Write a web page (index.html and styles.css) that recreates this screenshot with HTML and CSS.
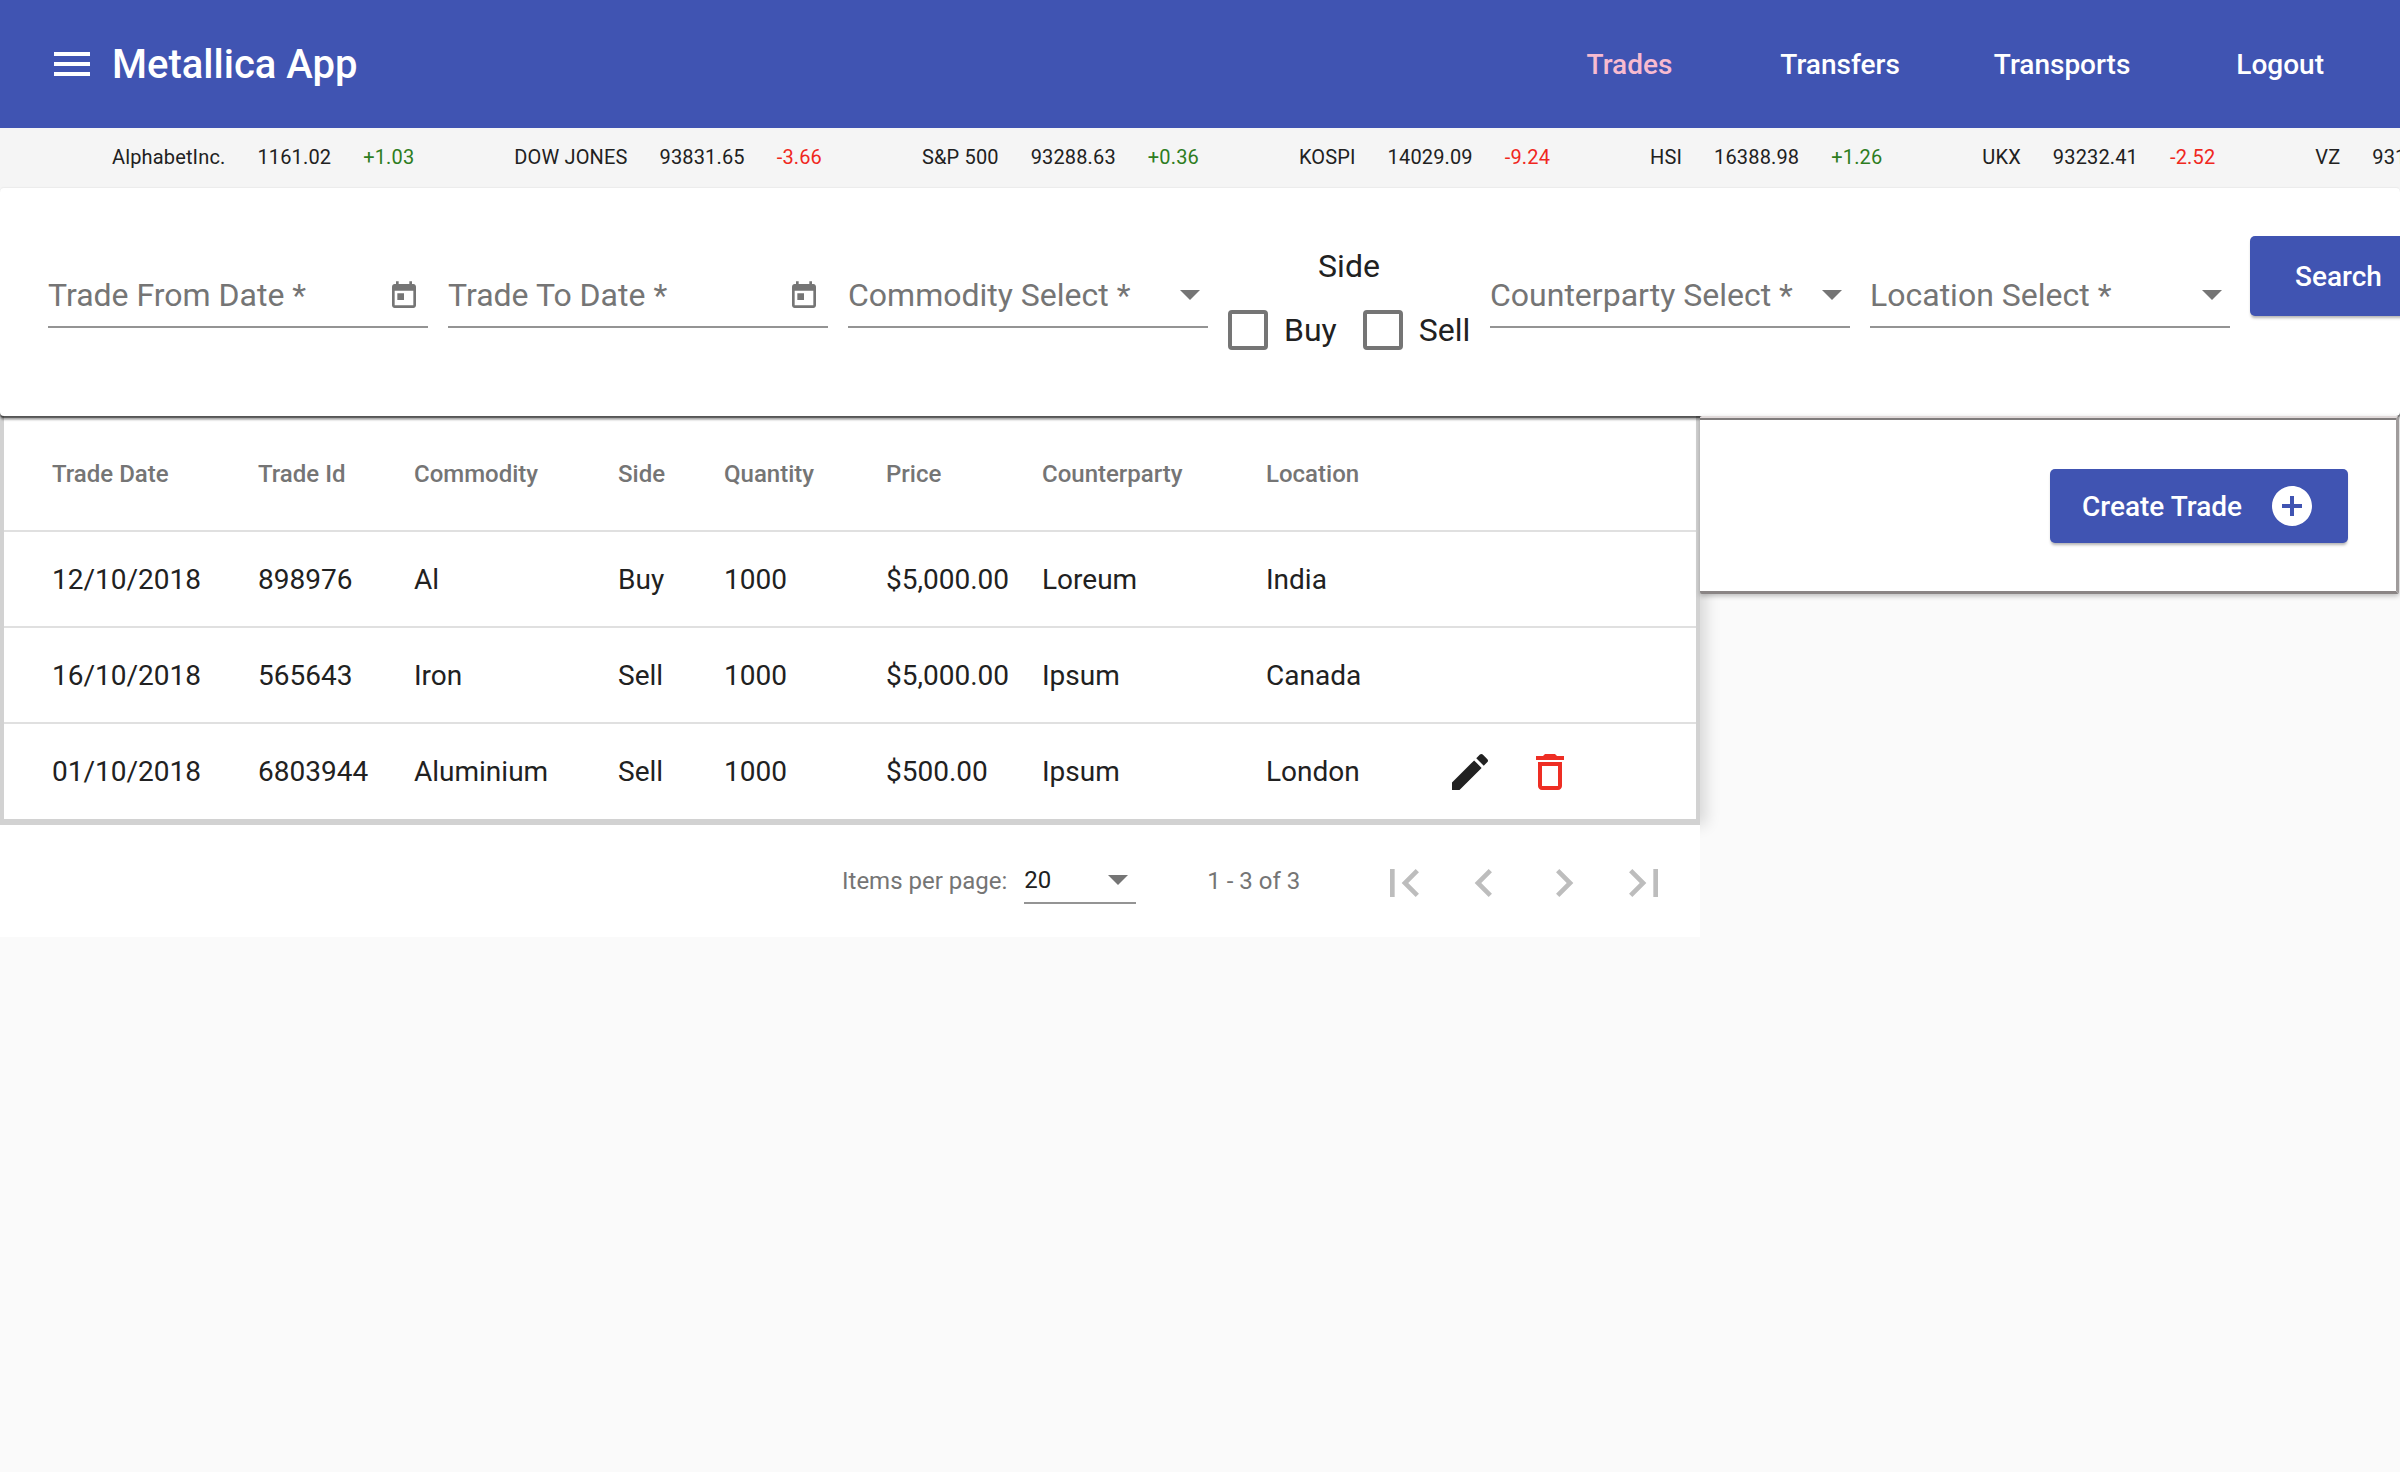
FILE: index.html
```html
<!DOCTYPE html>
<html lang="en">
<head>
    <meta charset="UTF-8">
    <title>Metallica App</title>
    <link rel="stylesheet" href="styles.css">
</head>
<body>
    <header class="topbar">
        <svg class="menu-icon" viewBox="0 0 24 24"><path d="M3 18h18v-2H3v2zm0-5h18v-2H3v2zm0-7v2h18V6H3z"/></svg>
        <span class="app-title">Metallica App</span>
        <nav class="topnav">
            <a class="nav-link nav-trades active">Trades</a>
            <a class="nav-link nav-transfers">Transfers</a>
            <a class="nav-link nav-transports">Transports</a>
            <a class="nav-link nav-logout">Logout</a>
        </nav>
    </header>

    <div class="ticker">
        <div class="tick"><span>AlphabetInc.</span><span>1161.02</span><span class="up">+1.03</span></div>
        <div class="tick"><span>DOW JONES</span><span>93831.65</span><span class="down">-3.66</span></div>
        <div class="tick"><span>S&amp;P 500</span><span>93288.63</span><span class="up">+0.36</span></div>
        <div class="tick"><span>KOSPI</span><span>14029.09</span><span class="down">-9.24</span></div>
        <div class="tick"><span>HSI</span><span>16388.98</span><span class="up">+1.26</span></div>
        <div class="tick"><span>UKX</span><span>93232.41</span><span class="down">-2.52</span></div>
        <div class="tick"><span>VZ</span><span>93116.20</span><span class="up">+0.88</span></div>
    </div>

    <section class="search-card">
        <div class="field date-field">
            <span class="field-label">Trade From Date *</span>
            <svg class="cal-icon" viewBox="0 0 24 24"><path d="M19 3h-1V1h-2v2H8V1H6v2H5c-1.11 0-1.99.9-1.99 2L3 19c0 1.1.89 2 2 2h14c1.1 0 2-.9 2-2V5c0-1.1-.9-2-2-2zm0 16H5V8h14v11zM7 10h5v5H7z"/></svg>
        </div>
        <div class="field date-field">
            <span class="field-label">Trade To Date *</span>
            <svg class="cal-icon" viewBox="0 0 24 24"><path d="M19 3h-1V1h-2v2H8V1H6v2H5c-1.11 0-1.99.9-1.99 2L3 19c0 1.1.89 2 2 2h14c1.1 0 2-.9 2-2V5c0-1.1-.9-2-2-2zm0 16H5V8h14v11zM7 10h5v5H7z"/></svg>
        </div>
        <div class="field select-field">
            <span class="field-label">Commodity Select *</span>
            <span class="arrow"></span>
        </div>
        <div class="side-group">
            <div class="side-title">Side</div>
            <div class="side-options">
                <span class="check"></span><span class="check-label">Buy</span>
                <span class="check"></span><span class="check-label">Sell</span>
            </div>
        </div>
        <div class="field select-field">
            <span class="field-label">Counterparty Select *</span>
            <span class="arrow"></span>
        </div>
        <div class="field select-field">
            <span class="field-label">Location Select *</span>
            <span class="arrow"></span>
        </div>
        <button class="btn search-btn">Search</button>
    </section>

    <main class="content">
        <div class="left-col">
            <table class="trades">
                <colgroup>
                    <col class="c-date"><col class="c-id"><col class="c-comm"><col class="c-side">
                    <col class="c-qty"><col class="c-price"><col class="c-cp"><col class="c-loc"><col>
                </colgroup>
                <thead>
                    <tr><th>Trade Date</th><th>Trade Id</th><th>Commodity</th><th>Side</th><th>Quantity</th><th>Price</th><th>Counterparty</th><th>Location</th><th></th></tr>
                </thead>
                <tbody>
                    <tr><td>12/10/2018</td><td>898976</td><td>Al</td><td>Buy</td><td>1000</td><td>$5,000.00</td><td>Loreum</td><td>India</td><td></td></tr>
                    <tr><td>16/10/2018</td><td>565643</td><td>Iron</td><td>Sell</td><td>1000</td><td>$5,000.00</td><td>Ipsum</td><td>Canada</td><td></td></tr>
                    <tr>
                        <td>01/10/2018</td><td>6803944</td><td>Aluminium</td><td>Sell</td><td>1000</td><td>$500.00</td><td>Ipsum</td><td>London</td>
                        <td class="actions">
                            <svg class="row-icon edit" viewBox="0 0 24 24"><path d="M3 17.25V21h3.75L17.81 9.94l-3.75-3.75L3 17.25zM20.71 7.04c.39-.39.39-1.02 0-1.41l-2.34-2.34c-.39-.39-1.02-.39-1.41 0l-1.83 1.83 3.75 3.75 1.83-1.83z"/></svg>
                            <svg class="row-icon del" viewBox="0 0 24 24"><path d="M6 19c0 1.1.9 2 2 2h8c1.1 0 2-.9 2-2V7H6v12zM8 9h8v10H8V9zm7.5-5l-1-1h-5l-1 1H5v2h14V4z"/></svg>
                        </td>
                    </tr>
                </tbody>
            </table>
            <div class="paginator">
                <span class="page-label">Items per page:</span>
                <div class="page-size"><span>20</span><span class="arrow"></span></div>
                <span class="page-range">1 - 3 of 3</span>
                <div class="page-btns">
                    <svg class="page-icon" viewBox="0 0 24 24"><path d="M18.41 16.59L13.82 12l4.59-4.59L17 6l-6 6 6 6zM6 6h2v12H6z"/></svg>
                    <svg class="page-icon" viewBox="0 0 24 24"><path d="M15.41 7.41L14 6l-6 6 6 6 1.41-1.41L10.83 12z"/></svg>
                    <svg class="page-icon" viewBox="0 0 24 24"><path d="M10 6L8.59 7.41 13.17 12l-4.58 4.59L10 18l6-6z"/></svg>
                    <svg class="page-icon" viewBox="0 0 24 24"><path d="M5.59 7.41L10.18 12l-4.59 4.59L7 18l6-6-6-6zM16 6h2v12h-2z"/></svg>
                </div>
            </div>
        </div>
        <aside class="create-panel">
            <button class="btn create-btn">
                Create Trade
                <svg class="add-icon" viewBox="0 0 24 24"><path d="M12 2C6.48 2 2 6.48 2 12s4.48 10 10 10 10-4.48 10-10S17.52 2 12 2zm5 11h-4v4h-2v-4H7v-2h4V7h2v4h4v2z"/></svg>
            </button>
        </aside>
    </main>
</body>
</html>
```

FILE: styles.css
```css
* { margin: 0; padding: 0; box-sizing: border-box; }
html, body { height: 100%; overflow: hidden; }
body { background: #fafafa; font-family: Roboto, "Liberation Sans", sans-serif; color: #212121; }

.topbar { display: flex; align-items: center; height: 128px; padding-left: 48px; background: #4054b2; color: #fff; }
.menu-icon { width: 48px; height: 48px; fill: #fff; margin-right: 16px; }
.app-title { font-size: 40px; font-weight: 500; }
.topnav { display: flex; margin-left: auto; margin-right: 76px; }
.nav-link { font-size: 28px; font-weight: 500; color: #fff; }
.nav-link.active { color: #f8bbd0; }
.nav-transfers { margin-left: 108px; }
.nav-transports { margin-left: 94px; }
.nav-logout { margin-left: 106px; }

.ticker { display: flex; align-items: center; gap: 100px; height: 60px; padding: 0 0 2px 112px; background: #f5f5f5; font-size: 20px; letter-spacing: .15px; white-space: nowrap; overflow: hidden; }
.tick { display: flex; gap: 32px; }
.up { color: #2e7d1e; }
.down { color: #f0281e; }

.search-card { position: relative; z-index: 2; display: flex; align-items: flex-start; gap: 20px; height: 228px; padding: 48px 0 0 48px; background: #fff; border-radius: 4px; box-shadow: 0 0 2px rgba(0,0,0,.14), 0 2px 1px rgba(0,0,0,.5), 0 4px 2px rgba(0,0,0,.3); overflow: hidden; }
.field { display: flex; align-items: flex-start; justify-content: space-between; flex: none; height: 58px; margin-top: 34px; padding-top: 6px; border-bottom: 2px solid #949494; }
.date-field { width: 380px; padding-right: 8px; }
.select-field { width: 360px; padding-right: 8px; }
.field-label { font-size: 32px; line-height: 38px; color: #757575; white-space: nowrap; }
.cal-icon { width: 32px; height: 32px; margin-top: 4px; fill: #757575; }
.field .arrow { margin-top: 14px; }
.arrow { display: block; width: 0; height: 0; border-left: 10px solid transparent; border-right: 10px solid transparent; border-top: 10px solid #757575; }

.side-group { flex: none; width: 242px; margin-top: 11px; }
.side-title { font-size: 32px; text-align: center; line-height: 38px; }
.side-options { display: flex; align-items: center; margin-top: 25px; }
.check { flex: none; width: 40px; height: 40px; border: 4px solid #757575; border-radius: 4px; margin-right: 16px; }
.check-label { font-size: 32px; margin-right: 26px; }

.btn { border: none; background: #4054b2; color: #fff; font-family: inherit; font-weight: 500; border-radius: 5px; box-shadow: 0 3px 3px -1px rgba(0,0,0,.3); }
.search-btn { flex: none; width: 190px; height: 80px; font-size: 28px; text-align: left; padding-left: 45px; }

.content { display: flex; align-items: flex-start; }
.left-col { width: 1700px; flex: none; }
.trades { width: 1700px; table-layout: fixed; border-collapse: separate; border-spacing: 0; background: #fff; border: solid #d2d2d2; border-width: 0 4px 6px 4px; box-shadow: 6px 0 14px rgba(0,0,0,.14); }
.c-date { width: 254px; }
.c-id { width: 156px; }
.c-comm { width: 204px; }
.c-side { width: 106px; }
.c-qty { width: 162px; }
.c-price { width: 156px; }
.c-cp { width: 224px; }
.c-loc { width: 180px; }
.trades th { height: 116px; padding-top: 2px; font-size: 24px; font-weight: 500; color: #757575; text-align: left; border-bottom: 2px solid #e0e0e0; }
.trades td { height: 96px; font-size: 28px; border-bottom: 2px solid #e0e0e0; }
.trades tr:last-child td { height: 95px; border-bottom: none; }
.trades th:first-child, .trades td:first-child { padding-left: 48px; }
.actions { white-space: nowrap; }
.row-icon { width: 48px; height: 48px; vertical-align: middle; }
.edit { fill: #212121; margin-right: 25px; }
.del { fill: #ee2e24; }

.paginator { position: relative; display: flex; align-items: center; height: 112px; padding-left: 842px; background: #fff; font-size: 24px; color: #757575; }
.page-size { display: flex; align-items: center; justify-content: space-between; width: 112px; height: 46px; margin-left: 17px; padding-right: 8px; color: #212121; border-bottom: 2px solid #949494; }
.page-range { margin-left: 71px; }
.page-btns { display: flex; margin: 3px 0 0 76px; gap: 24px; }
.page-icon { width: 56px; height: 56px; fill: #bdbdbd; }

.create-panel { position: relative; z-index: 3; display: flex; justify-content: flex-end; width: 699px; height: 178px; padding: 51px 48px 0 0; background: #fff; border-top: 2px solid #e0d9d9; border-right: 3px solid #a09c9c; border-bottom: 3px solid #8a8585; border-radius: 2px; box-shadow: inset 0 2px 0 #807c7c, 0 2px 5px rgba(0,0,0,.25); }
.create-btn { display: flex; align-items: center; justify-content: space-between; width: 298px; height: 74px; padding: 0 32px; font-size: 28px; }
.add-icon { width: 48px; height: 48px; fill: #fff; }
```
